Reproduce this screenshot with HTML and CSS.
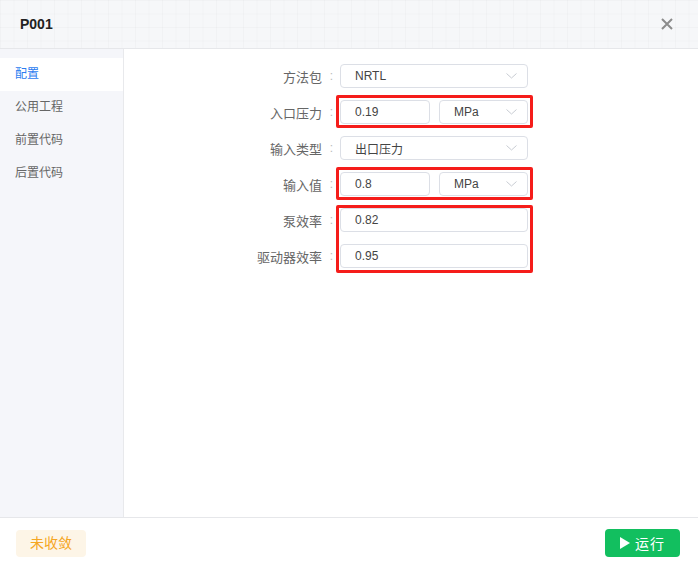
FILE: index.html
```html
<!DOCTYPE html>
<html lang="zh-CN">
<head>
<meta charset="UTF-8">
<meta name="viewport" content="width=device-width, initial-scale=1.0">
<title>P001</title>
<link rel="stylesheet" href="styles.css">
</head>
<body>
<div class="dialog">
  <div class="header">
    <span class="title">P001</span>
    <svg class="close" width="12" height="12" viewBox="0 0 12 12">
      <path d="M1 1 L11 11 M11 1 L1 11" stroke="#8c8c8c" stroke-width="2" fill="none"/>
    </svg>
  </div>

  <div class="main">
    <div class="side">
      <div class="side-item active">配置</div>
      <div class="side-item">公用工程</div>
      <div class="side-item">前置代码</div>
      <div class="side-item">后置代码</div>
    </div>

    <div class="content">
      <div class="form">
        <label class="lbl">方法包</label><span class="colon">:</span>
        <div class="field r1">
          <div class="select wide"><span>NRTL</span><svg width="11" height="6" viewBox="0 0 11 6"><path d="M0.5 0.5 L5.5 5 L10.5 0.5" stroke="#c8ccd3" fill="none"/></svg></div>
        </div>

        <label class="lbl">入口压力</label><span class="colon">:</span>
        <div class="field r2">
          <input class="inp half" value="0.19" readonly>
          <div class="select half"><span>MPa</span><svg width="11" height="6" viewBox="0 0 11 6"><path d="M0.5 0.5 L5.5 5 L10.5 0.5" stroke="#c8ccd3" fill="none"/></svg></div>
        </div>

        <label class="lbl">输入类型</label><span class="colon">:</span>
        <div class="field r3">
          <div class="select wide"><span>出口压力</span><svg width="11" height="6" viewBox="0 0 11 6"><path d="M0.5 0.5 L5.5 5 L10.5 0.5" stroke="#c8ccd3" fill="none"/></svg></div>
        </div>

        <label class="lbl">输入值</label><span class="colon">:</span>
        <div class="field r4">
          <input class="inp half" value="0.8" readonly>
          <div class="select half"><span>MPa</span><svg width="11" height="6" viewBox="0 0 11 6"><path d="M0.5 0.5 L5.5 5 L10.5 0.5" stroke="#c8ccd3" fill="none"/></svg></div>
        </div>

        <label class="lbl">泵效率</label><span class="colon">:</span>
        <div class="field r5">
          <input class="inp wide" value="0.82" readonly>
        </div>

        <label class="lbl">驱动器效率</label><span class="colon">:</span>
        <div class="field r6">
          <input class="inp wide" value="0.95" readonly>
        </div>

        <div class="mark mark-a"></div>
        <div class="mark mark-b"></div>
        <div class="mark mark-c"></div>
      </div>
    </div>
  </div>

  <div class="footer">
    <span class="status">未收敛</span>
    <button class="run">
      <svg width="10" height="12" viewBox="0 0 10 12"><path d="M0 0 L10 6 L0 12 Z" fill="#fff"/></svg>
      运行
    </button>
  </div>
</div>
</body>
</html>
```

FILE: styles.css
```css
body {
  margin: 0;
  font-family: "Liberation Sans", "Noto Sans CJK SC", sans-serif;
  background: #fff;
}

.dialog {
  width: 698px;
  height: 568px;
  display: flex;
  flex-direction: column;
}

.header {
  height: 48px;
  border-bottom: 1px solid #e6e7ea;
  display: flex;
  align-items: center;
  justify-content: space-between;
  padding: 0 25px 0 20px;
  background-color: #f6f7f9;
  background-image:
    linear-gradient(to right, rgba(0, 0, 0, 0.018) 1px, transparent 1px),
    linear-gradient(to bottom, rgba(0, 0, 0, 0.018) 1px, transparent 1px);
  background-size: 13.5px 13.5px;
}

.title {
  font-size: 14px;
  font-weight: bold;
  color: #222;
}

.main {
  flex: 1;
  display: flex;
  min-height: 0;
}

.side {
  width: 123px;
  background: #f5f6fa;
  border-right: 1px solid #e8e9ec;
  padding-top: 9px;
}

.side-item {
  height: 33px;
  line-height: 33px;
  padding-left: 15px;
  font-size: 12px;
  color: #666;
}

.side-item.active {
  background: #fff;
  color: #2b7cf0;
}

.content {
  flex: 1;
  padding: 15px 0 0 134px;
}

.form {
  display: grid;
  grid-template-columns: 64px 18px 188px;
  grid-auto-rows: 24px;
  row-gap: 12px;
  align-items: center;
}

.lbl {
  grid-column: 1;
  text-align: right;
  font-size: 13px;
  color: #666;
  white-space: nowrap;
  justify-self: end;
}

.colon {
  grid-column: 2;
  text-align: center;
  font-size: 12px;
  color: #bbb;
  padding-left: 1px;
}

.field {
  grid-column: 3;
  display: flex;
  gap: 9px;
  height: 24px;
}

.r1 { grid-row: 1; }
.r2 { grid-row: 2; }
.r3 { grid-row: 3; }
.r4 { grid-row: 4; }
.r5 { grid-row: 5; }
.r6 { grid-row: 6; }

.inp,
.select {
  box-sizing: border-box;
  height: 24px;
  border: 1px solid #dcdfe6;
  border-radius: 4px;
  font-family: inherit;
  font-size: 12px;
  color: #444;
  padding: 0 10px 0 14px;
  background: #fff;
  outline: none;
}

.select {
  display: flex;
  align-items: center;
  justify-content: space-between;
}

.wide {
  width: 188px;
}

.half {
  width: 90px;
}

.select.half {
  width: 89px;
}

.mark {
  grid-column: 3;
  align-self: stretch;
  border: 3px solid #f51d1a;
  border-radius: 2px;
  margin: -5px -5px -4px -4px;
  pointer-events: none;
  z-index: 1;
}

.mark-a {
  grid-row: 2;
}

.mark-b {
  grid-row: 4;
}

.mark-c {
  grid-row: 5 / span 2;
  margin-top: -3px;
  margin-bottom: -5px;
}

.footer {
  height: 50px;
  border-top: 1px solid #e6e7ea;
  display: flex;
  align-items: center;
  justify-content: space-between;
  padding: 0 18px 0 16px;
}

.status {
  width: 70px;
  height: 27px;
  line-height: 27px;
  text-align: center;
  border-radius: 4px;
  background: #fdf5e7;
  color: #f5a623;
  font-size: 14px;
}

.run {
  width: 75px;
  height: 28px;
  border: none;
  border-radius: 4px;
  background: #12bf5f;
  color: #fff;
  font-family: inherit;
  font-size: 14px;
  display: flex;
  align-items: center;
  justify-content: center;
  gap: 5px;
  letter-spacing: 1px;
}
```
